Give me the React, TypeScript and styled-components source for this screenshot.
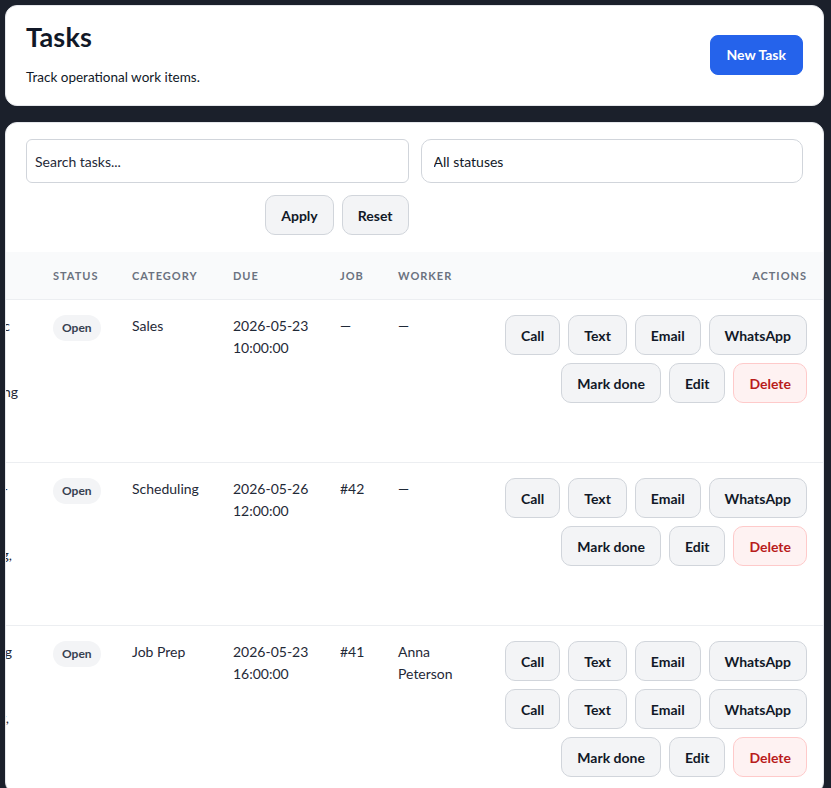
import React, { useLayoutEffect, useRef } from "react";
import styled, { createGlobalStyle } from "styled-components";

const GlobalStyle = createGlobalStyle`
  * { box-sizing: border-box; }
  html, body { margin: 0; padding: 0; }
  body {
    background: #1b202b;
    font-family: "Lato", "Open Sans", sans-serif;
    color: #1f2937;
  }
`;

const Page = styled.div`
  display: flex;
  flex-direction: column;
  gap: 16px;
  padding: 5px 7px 24px 5px;
`;

const Card = styled.section`
  background: #ffffff;
  border: 1px solid #e5e7eb;
  border-radius: 12px;
  overflow: hidden;
`;

const HeaderCard = styled(Card)`
  display: flex;
  align-items: center;
  justify-content: space-between;
  padding: 15px 20px 17px;
`;

const TitleBlock = styled.div`
  display: flex;
  flex-direction: column;
`;

const Title = styled.h1`
  margin: 0;
  font-size: 27px;
  line-height: 32px;
  font-weight: 700;
  letter-spacing: 0.2px;
  color: #111827;
`;

const Subtitle = styled.p`
  margin: 14px 0 0;
  font-size: 13.5px;
  line-height: 21px;
  color: #111827;
`;

const Button = styled.button<{ $variant?: "primary" | "default" | "danger" }>`
  height: 40px;
  padding: 0 15px;
  border-radius: 10px;
  font-family: inherit;
  font-size: 14px;
  font-weight: 700;
  white-space: nowrap;
  cursor: pointer;
  border: 1px solid
    ${(p) => (p.$variant === "primary" ? "#2563eb" : p.$variant === "danger" ? "#fecaca" : "#d1d5db")};
  background: ${(p) => (p.$variant === "primary" ? "#2563eb" : p.$variant === "danger" ? "#fef2f2" : "#f3f4f6")};
  color: ${(p) => (p.$variant === "primary" ? "#ffffff" : p.$variant === "danger" ? "#b91c1c" : "#111827")};
`;

const PrimaryButton = styled(Button)`
  border-radius: 8px;
  padding: 0 16px;
`;

const FilterForm = styled.form`
  display: grid;
  grid-template-columns: 1fr 1fr;
  gap: 12px;
  padding: 16px 20px 17px;
`;

const SearchInput = styled.input`
  height: 44px;
  padding: 0 8px;
  border: 1px solid #d1d5db;
  border-radius: 6px;
  font-family: inherit;
  font-size: 14px;
  color: #111827;
  background: #fff;
  &::placeholder { color: #1f2937; }
`;

const StatusSelect = styled.select`
  height: 44px;
  padding: 0 12px;
  border: 1px solid #d1d5db;
  border-radius: 10px;
  font-family: inherit;
  font-size: 14px;
  color: #111827;
  background: #fff;
  appearance: none;
`;

const FilterActions = styled.div`
  display: flex;
  justify-content: flex-end;
  gap: 8px;
`;

const TableScroll = styled.div`
  overflow-x: auto;
  scrollbar-width: none;
  &::-webkit-scrollbar { display: none; }
`;

const Table = styled.table`
  width: 1046px;
  table-layout: fixed;
  border-collapse: collapse;
`;

const HeadRow = styled.tr`
  background: #f9fafb;
  border-bottom: 1px solid #eceef1;
`;

const Th = styled.th<{ $align?: "left" | "right" }>`
  padding: 16px;
  font-size: 11px;
  line-height: 15px;
  font-weight: 700;
  letter-spacing: 0.09em;
  text-transform: uppercase;
  color: #6b7280;
  text-align: ${(p) => p.$align ?? "left"};
`;

const Row = styled.tr`
  border-bottom: 1px solid #eceef1;
`;

const Td = styled.td`
  padding: 15px 16px;
  vertical-align: top;
  font-size: 14px;
  line-height: 22px;
  color: #1f2937;
`;

const TaskLine = styled.div<{ $inset: number }>`
  white-space: nowrap;
  text-align: right;
  overflow: hidden;
  padding-right: ${(p) => p.$inset}px;
  height: 22px;
`;

const Badge = styled.span`
  display: inline-flex;
  align-items: center;
  height: 26px;
  padding: 0 9px;
  border-radius: 999px;
  background: #f3f4f6;
  color: #374151;
  font-size: 12px;
  font-weight: 700;
  vertical-align: top;
`;

const NoWrap = styled.span`
  white-space: nowrap;
`;

const ActionStack = styled.div`
  display: flex;
  flex-direction: column;
  gap: 8px;
`;

const ActionRow = styled.div`
  display: flex;
  justify-content: flex-end;
  flex-wrap: wrap;
  gap: 8px;
`;

type Task = {
  lines: { text: string; inset: number }[];
  category: string;
  date: string;
  time: string;
  job: string;
  worker: string[];
  contacts: number;
};

const hidden = (text: string) => ({ text, inset: 60 });

const tasks: Task[] = [
  {
    lines: [
      { text: "Call Harborview about electric", inset: 11 },
      hidden("panel upgrade and confirm"),
      hidden("the access window for the"),
      { text: "crew before final pricing", inset: 3 },
      hidden("is sent to the customer"),
      hidden("this week."),
    ],
    category: "Sales",
    date: "2026-05-23",
    time: "10:00:00",
    job: "—",
    worker: ["—"],
    contacts: 1,
  },
  {
    lines: [
      { text: "Confirm crew availability for -", inset: 13 },
      hidden("the kitchen remodel and send"),
      hidden("the updated schedule to the"),
      { text: "homeowner before staging,", inset: 9 },
      hidden("then lock the start date"),
      hidden("in the calendar."),
    ],
    category: "Scheduling",
    date: "2026-05-26",
    time: "12:00:00",
    job: "#42",
    worker: ["—"],
    contacts: 1,
  },
  {
    lines: [
      { text: "Prepare materials for tiling", inset: 9 },
      hidden("and confirm delivery of the"),
      hidden("grout, trim and underlayment"),
      { text: "with the supplier today,", inset: 12 },
      hidden("then load the van for the"),
      hidden("morning crew."),
    ],
    category: "Job Prep",
    date: "2026-05-23",
    time: "16:00:00",
    job: "#41",
    worker: ["Anna", "Peterson"],
    contacts: 2,
  },
];

const contactLabels = ["Call", "Text", "Email", "WhatsApp"];

export default function App() {
  const scrollRef = useRef<HTMLDivElement>(null);

  useLayoutEffect(() => {
    const el = scrollRef.current;
    if (el) el.scrollLeft = el.scrollWidth;
  }, []);

  return (
    <>
      <GlobalStyle />
      <Page>
        <HeaderCard>
          <TitleBlock>
            <Title>Tasks</Title>
            <Subtitle>Track operational work items.</Subtitle>
          </TitleBlock>
          <PrimaryButton $variant="primary" type="button">
            New Task
          </PrimaryButton>
        </HeaderCard>

        <Card>
          <FilterForm onSubmit={(e) => e.preventDefault()}>
            <SearchInput placeholder="Search tasks..." />
            <StatusSelect defaultValue="">
              <option value="">All statuses</option>
              <option value="open">Open</option>
              <option value="done">Done</option>
            </StatusSelect>
            <FilterActions>
              <Button type="submit">Apply</Button>
              <Button type="button">Reset</Button>
            </FilterActions>
          </FilterForm>

          <TableScroll ref={scrollRef}>
            <Table>
              <colgroup>
                <col style={{ width: 260 }} />
                <col style={{ width: 79 }} />
                <col style={{ width: 101 }} />
                <col style={{ width: 107 }} />
                <col style={{ width: 58 }} />
                <col style={{ width: 87 }} />
                <col style={{ width: 354 }} />
              </colgroup>
              <thead>
                <HeadRow>
                  <Th>Task</Th>
                  <Th>Status</Th>
                  <Th>Category</Th>
                  <Th>Due</Th>
                  <Th>Job</Th>
                  <Th>Worker</Th>
                  <Th $align="right">Actions</Th>
                </HeadRow>
              </thead>
              <tbody>
                {tasks.map((t, i) => (
                  <Row key={i}>
                    <Td>
                      {t.lines.map((l, j) => (
                        <TaskLine key={j} $inset={l.inset}>
                          {l.text}
                        </TaskLine>
                      ))}
                    </Td>
                    <Td>
                      <Badge>Open</Badge>
                    </Td>
                    <Td>{t.category}</Td>
                    <Td>
                      <NoWrap>{t.date}</NoWrap> <NoWrap>{t.time}</NoWrap>
                    </Td>
                    <Td>{t.job}</Td>
                    <Td>{t.worker.join(" ")}</Td>
                    <Td>
                      <ActionStack>
                        {Array.from({ length: t.contacts }).map((_, k) => (
                          <ActionRow key={k}>
                            {contactLabels.map((c) => (
                              <Button key={c} type="button">
                                {c}
                              </Button>
                            ))}
                          </ActionRow>
                        ))}
                        <ActionRow>
                          <Button type="button">Mark done</Button>
                          <Button type="button">Edit</Button>
                          <Button type="button" $variant="danger">
                            Delete
                          </Button>
                        </ActionRow>
                      </ActionStack>
                    </Td>
                  </Row>
                ))}
              </tbody>
            </Table>
          </TableScroll>
        </Card>
      </Page>
    </>
  );
}
